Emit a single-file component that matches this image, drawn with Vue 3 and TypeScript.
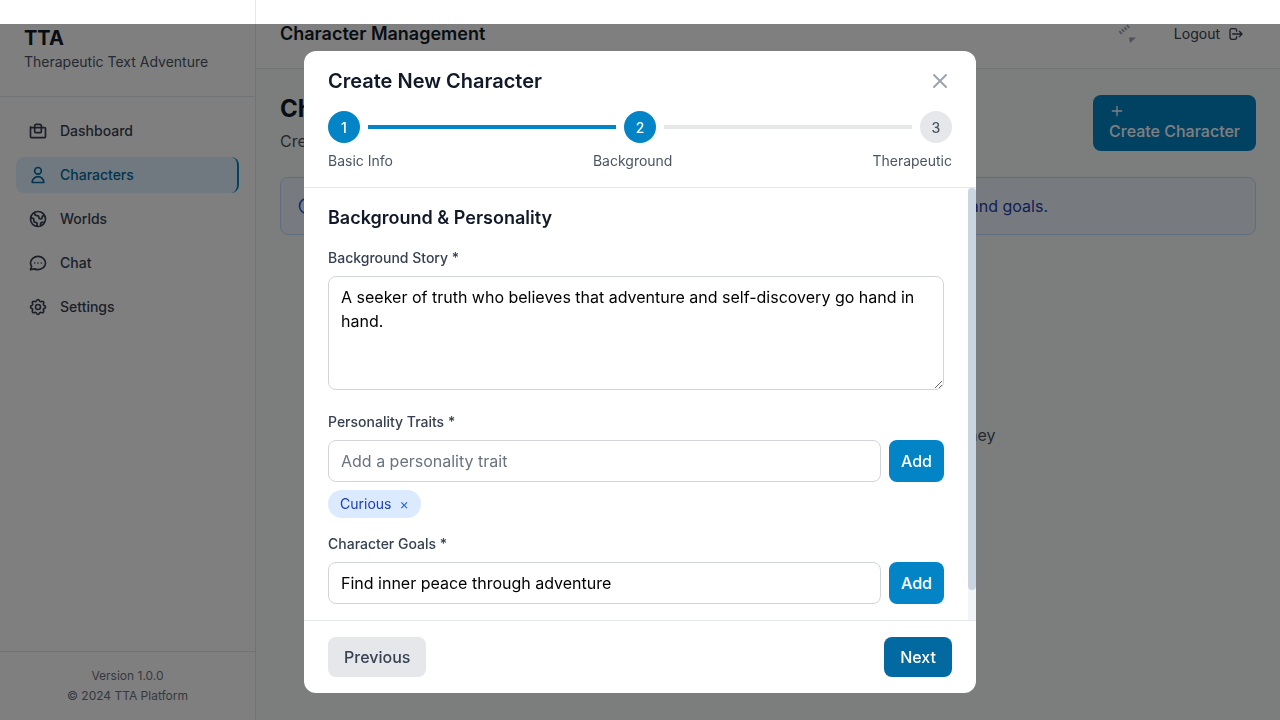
<script setup lang="ts">
import { ref } from 'vue';

interface NavItem {
  label: string;
  paths: string[];
  active?: boolean;
}

const navItems: NavItem[] = [
  {
    label: 'Dashboard',
    paths: ['M3 7v12a1 1 0 001 1h16a1 1 0 001-1V9a1 1 0 00-1-1h-4M8 8H4M8 13V6a2 2 0 012-2h4a2 2 0 012 2v7a1 1 0 01-1 1H9a1 1 0 01-1-1zM8 8h8'],
  },
  {
    label: 'Characters',
    active: true,
    paths: ['M16 7a4 4 0 11-8 0 4 4 0 018 0zM12 14a7 7 0 00-7 7h14a7 7 0 00-7-7z'],
  },
  {
    label: 'Worlds',
    paths: ['M3.055 11H5a2 2 0 012 2v1a2 2 0 002 2 2 2 0 012 2v2.945M8 3.935V5.5A2.5 2.5 0 0010.5 8h.5a2 2 0 012 2 2 2 0 104 0 2 2 0 012-2h1.064M15 20.488V18a2 2 0 012-2h3.064M21 12a9 9 0 11-18 0 9 9 0 0118 0z'],
  },
  {
    label: 'Chat',
    paths: ['M8 12h.01M12 12h.01M16 12h.01M21 12c0 4.418-4.03 8-9 8a9.863 9.863 0 01-4.255-.949L3 20l1.395-3.72C3.512 15.042 3 13.574 3 12c0-4.418 4.03-8 9-8s9 3.582 9 8z'],
  },
  {
    label: 'Settings',
    paths: [
      'M10.325 4.317c.426-1.756 2.924-1.756 3.35 0a1.724 1.724 0 002.573 1.066c1.543-.94 3.31.826 2.37 2.37a1.724 1.724 0 001.065 2.572c1.756.426 1.756 2.924 0 3.35a1.724 1.724 0 00-1.066 2.573c.94 1.543-.826 3.31-2.37 2.37a1.724 1.724 0 00-2.572 1.065c-.426 1.756-2.924 1.756-3.35 0a1.724 1.724 0 00-2.573-1.066c-1.543.94-3.31-.826-2.37-2.37a1.724 1.724 0 00-1.065-2.572c-1.756-.426-1.756-2.924 0-3.35a1.724 1.724 0 001.066-2.573c-.94-1.543.826-3.31 2.37-2.37.996.608 2.296.07 2.572-1.065z',
      'M15 12a3 3 0 11-6 0 3 3 0 016 0z',
    ],
  },
];

const steps = [
  { num: 1, label: 'Basic Info', done: true },
  { num: 2, label: 'Background', done: true },
  { num: 3, label: 'Therapeutic', done: false },
];

const story = ref('A seeker of truth who believes that adventure and self-discovery go hand in hand.');
const trait = ref('');
const goal = ref('Find inner peace through adventure');
const traits = ref<string[]>(['Curious']);

const removeTrait = (t: string): void => {
  traits.value = traits.value.filter((x) => x !== t);
};
</script>

<template>
  <div class="shell">
    <aside class="sidebar">
      <div class="brand">
        <h1>TTA</h1>
        <p>Therapeutic Text Adventure</p>
      </div>
      <nav class="nav">
        <a v-for="item in navItems" :key="item.label" class="nav-item" :class="{ active: item.active }">
          <svg class="nav-icon" viewBox="0 0 24 24" fill="none" stroke="currentColor" stroke-width="2" stroke-linecap="round" stroke-linejoin="round">
            <path v-for="p in item.paths" :key="p" :d="p" />
          </svg>
          <span>{{ item.label }}</span>
        </a>
      </nav>
      <div class="side-foot">
        <p>Version 1.0.0</p>
        <p class="copy">© 2024 TTA Platform</p>
      </div>
    </aside>

    <div class="main">
      <header class="topbar">
        <h2>Character Management</h2>
        <div class="top-actions">
          <svg width="20" height="20" viewBox="0 0 20 20">
            <path d="M2.300 7.100l2.400 2.800M4.800 5.100l2.400 2.800M7.300 3.100l2.400 2.800M9.800 1.100l2.400 2.800" stroke="#9ca3af" stroke-width="1.700" fill="none" />
            <path d="M12 13.500h7l-6 5.500z" fill="#9ca3af" />
          </svg>
          <button class="logout">
            <span>Logout</span>
            <svg width="16" height="16" viewBox="0 0 24 24" fill="none" stroke="currentColor" stroke-width="2" stroke-linecap="round" stroke-linejoin="round">
              <path d="M17 16l4-4m0 0l-4-4m4 4H7m6 4v1a3 3 0 01-3 3H6a3 3 0 01-3-3V7a3 3 0 013-3h4a3 3 0 013 3v1" />
            </svg>
          </button>
        </div>
      </header>

      <main class="content">
        <div class="page-head">
          <div>
            <h1>Characters</h1>
            <p>Create and manage your therapeutic characters</p>
          </div>
          <button class="create">
            <svg width="16" height="16" viewBox="0 0 24 24" fill="none" stroke="currentColor" stroke-width="2" stroke-linecap="round">
              <path d="M12 5v14m7-7H5" />
            </svg>
            Create Character
          </button>
        </div>
        <div class="alert">
          <svg width="20" height="20" viewBox="0 0 24 24" fill="none" stroke="#2563eb" stroke-width="2" stroke-linecap="round">
            <path d="M13 16h-1v-4h-1m1-4h.01M21 12a9 9 0 11-18 0 9 9 0 0118 0z" />
          </svg>
          <span>Characters are the heart of your story. Give them a unique background, personality, and goals.</span>
        </div>
        <div class="empty">
          <div class="empty-icon"></div>
          <h3>No characters yet</h3>
          <p>Create your first character to begin your therapeutic journey</p>
        </div>
      </main>
    </div>

    <div class="overlay">
      <div class="modal">
        <div class="modal-head">
          <div class="title-row">
            <h2>Create New Character</h2>
            <button class="close" aria-label="Close">
              <svg width="24" height="24" viewBox="0 0 24 24" fill="none" stroke="currentColor" stroke-width="2" stroke-linecap="round" stroke-linejoin="round">
                <path d="M6 18L18 6M6 6l12 12" />
              </svg>
            </button>
          </div>
          <div class="stepper">
            <template v-for="(s, i) in steps" :key="s.num">
              <div class="dot" :class="{ on: s.done }">{{ s.num }}</div>
              <div v-if="i < steps.length - 1" class="bar" :class="{ on: s.done && steps[i + 1].done }"></div>
            </template>
          </div>
          <div class="step-labels">
            <span v-for="s in steps" :key="s.label">{{ s.label }}</span>
          </div>
        </div>

        <div class="modal-middle">
          <div class="modal-body">
            <h3>Background &amp; Personality</h3>

            <label class="field-label">Background Story *</label>
            <textarea v-model="story" class="control story" rows="4"></textarea>

            <label class="field-label">Personality Traits *</label>
            <div class="add-row">
              <input v-model="trait" class="control" placeholder="Add a personality trait" />
              <button class="add">Add</button>
            </div>
            <div class="tags">
              <span v-for="t in traits" :key="t" class="tag">
                {{ t }}
                <button class="tag-x" @click="removeTrait(t)">×</button>
              </span>
            </div>

            <label class="field-label">Character Goals *</label>
            <div class="add-row">
              <input v-model="goal" class="control" placeholder="Add a goal" />
              <button class="add">Add</button>
            </div>
          </div>
          <div class="track"><div class="thumb"></div></div>
        </div>

        <div class="modal-foot">
          <button class="prev">Previous</button>
          <button class="next">Next</button>
        </div>
      </div>
    </div>
  </div>
</template>

<style>
html,
body {
  margin: 0;
  overflow: hidden;
}
</style>

<style scoped>
.shell {
  display: flex;
  height: 720px;
  font-family: Inter, 'Liberation Sans', sans-serif;
  color: #111827;
  background: #f9fafb;
}
h1,
h2,
h3,
p {
  margin: 0;
}
button {
  font-family: inherit;
  border: 0;
  cursor: pointer;
}

.sidebar {
  width: 255px;
  flex: none;
  display: flex;
  flex-direction: column;
  background: #ffffff;
  border-right: 1px solid #e5e7eb;
}
.brand {
  padding: 24px;
  border-bottom: 1px solid #e5e7eb;
}
.brand h1 {
  font-size: 20px;
  line-height: 28px;
  font-weight: 700;
}
.brand p {
  font-size: 14px;
  line-height: 20px;
  color: #4b5563;
}
.nav {
  flex: 1;
  padding: 16px;
  display: flex;
  flex-direction: column;
  gap: 8px;
}
.nav-item {
  display: flex;
  align-items: center;
  gap: 12px;
  padding: 8px 12px;
  font-size: 14px;
  line-height: 20px;
  font-weight: 500;
  color: #374151;
  border-radius: 8px;
}
.nav-item.active {
  background: #e0f2fe;
  color: #0369a1;
  border-right: 2px solid #0284c7;
}
.nav-icon {
  width: 20px;
  height: 20px;
  flex: none;
}
.side-foot {
  padding: 16px;
  border-top: 1px solid #e5e7eb;
  text-align: center;
  font-size: 12px;
  line-height: 16px;
  color: #6b7280;
}
.copy {
  margin-top: 4px;
}

.main {
  flex: 1;
  min-width: 0;
  display: flex;
  flex-direction: column;
}
.topbar {
  display: flex;
  align-items: center;
  justify-content: space-between;
  padding: 16px 24px;
  background: #ffffff;
  border-bottom: 1px solid #e5e7eb;
}
.topbar h2 {
  font-size: 18px;
  line-height: 28px;
  font-weight: 600;
}
.top-actions {
  display: flex;
  align-items: center;
  gap: 25px;
}
.logout {
  display: flex;
  align-items: center;
  gap: 8px;
  padding: 8px 12px;
  font-size: 14px;
  line-height: 20px;
  color: #374151;
  background: transparent;
}
.content {
  padding: 24px;
}
.page-head {
  display: flex;
  justify-content: space-between;
  align-items: center;
  margin-bottom: 24px;
}
.page-head h1 {
  font-size: 24px;
  line-height: 32px;
  font-weight: 700;
}
.page-head p {
  margin-top: 4px;
  font-size: 16px;
  line-height: 24px;
  color: #4b5563;
}
.create {
  padding: 8px 16px;
  font-size: 16px;
  line-height: 24px;
  font-weight: 500;
  color: #ffffff;
  text-align: left;
  background: #0284c7;
  border-radius: 8px;
}
.create svg {
  display: block;
}
.alert {
  display: flex;
  align-items: center;
  gap: 17px;
  padding: 16px;
  font-size: 16px;
  line-height: 24px;
  color: #1e40af;
  background: #eff6ff;
  border: 1px solid #bfdbfe;
  border-radius: 8px;
}
.empty {
  margin-top: 24px;
  padding-top: 48px;
  display: flex;
  flex-direction: column;
  align-items: center;
  text-align: center;
}
.empty-icon {
  width: 64px;
  height: 64px;
  margin-bottom: 16px;
  border-radius: 50%;
  background: #e5e7eb;
}
.empty h3 {
  margin-bottom: 8px;
  font-size: 20px;
  line-height: 28px;
  font-weight: 600;
}
.empty p {
  font-size: 16px;
  line-height: 24px;
  color: #4b5563;
}

.overlay {
  position: fixed;
  top: 24px;
  left: 0;
  right: 0;
  bottom: 0;
  display: flex;
  align-items: center;
  justify-content: center;
  background: rgba(0, 0, 0, 0.5);
}
.modal {
  width: 672px;
  height: 642px;
  display: flex;
  flex-direction: column;
  background: #ffffff;
  border-radius: 12px;
  overflow: hidden;
}
.modal-head {
  padding: 16px 24px;
  border-bottom: 1px solid #e5e7eb;
}
.title-row {
  display: flex;
  align-items: center;
  justify-content: space-between;
  margin-bottom: 16px;
}
.title-row h2 {
  font-size: 20px;
  line-height: 28px;
  font-weight: 600;
}
.close {
  display: block;
  padding: 0;
  height: 24px;
  color: #9ca3af;
  background: transparent;
}
.stepper {
  display: flex;
  align-items: center;
  gap: 8px;
}
.dot {
  width: 32px;
  height: 32px;
  flex: none;
  display: flex;
  align-items: center;
  justify-content: center;
  font-size: 14px;
  font-weight: 500;
  color: #4b5563;
  background: #e5e7eb;
  border-radius: 50%;
}
.dot.on {
  color: #ffffff;
  background: #0284c7;
}
.bar {
  flex: 1;
  height: 4px;
  background: #e5e7eb;
}
.bar.on {
  background: #0284c7;
}
.step-labels {
  display: flex;
  justify-content: space-between;
  margin-top: 8px;
  font-size: 14px;
  line-height: 20px;
  color: #4b5563;
}
.modal-middle {
  flex: 1;
  min-height: 0;
  display: flex;
}
.modal-body {
  flex: 1;
  min-width: 0;
  overflow: hidden;
  padding: 16px 24px 0;
}
.track {
  width: 8px;
  flex: none;
  background: #f1f5f9;
}
.thumb {
  height: 402px;
  background: #cbd5e1;
  border-radius: 4px;
}
.modal-body h3 {
  margin-bottom: 16px;
  font-size: 18px;
  line-height: 28px;
  font-weight: 600;
}
.field-label {
  display: block;
  margin-bottom: 8px;
  font-size: 14px;
  line-height: 20px;
  font-weight: 500;
  color: #374151;
}
.control {
  flex: 1;
  min-width: 0;
  box-sizing: border-box;
  padding: 8px 12px;
  font-family: inherit;
  font-size: 16px;
  line-height: 24px;
  color: #000000;
  background: #ffffff;
  border: 1px solid #d1d5db;
  border-radius: 8px;
  outline: none;
}
.control::placeholder {
  color: #6b7280;
}
.story {
  display: block;
  width: 100%;
  margin-bottom: 22px;
}
.add-row {
  display: flex;
  gap: 8px;
}
.add {
  padding: 8px 12px;
  font-size: 16px;
  line-height: 24px;
  font-weight: 500;
  color: #ffffff;
  background: #0284c7;
  border-radius: 8px;
}
.tags {
  display: flex;
  gap: 8px;
  margin: 8px 0 16px;
}
.tag {
  display: inline-flex;
  align-items: center;
  gap: 8px;
  padding: 4px 12px;
  font-size: 14px;
  line-height: 20px;
  color: #1e40af;
  background: #dbeafe;
  border-radius: 14px;
}
.tag-x {
  padding: 0;
  font-size: 14px;
  line-height: 20px;
  color: #2563eb;
  background: transparent;
}
.modal-foot {
  display: flex;
  justify-content: space-between;
  padding: 16px 24px;
  border-top: 1px solid #e5e7eb;
}
.prev,
.next {
  height: 40px;
  padding: 0 16px;
  font-size: 16px;
  font-weight: 500;
  border-radius: 8px;
}
.prev {
  color: #374151;
  background: #e5e7eb;
}
.next {
  color: #ffffff;
  background: #0369a1;
}
</style>
